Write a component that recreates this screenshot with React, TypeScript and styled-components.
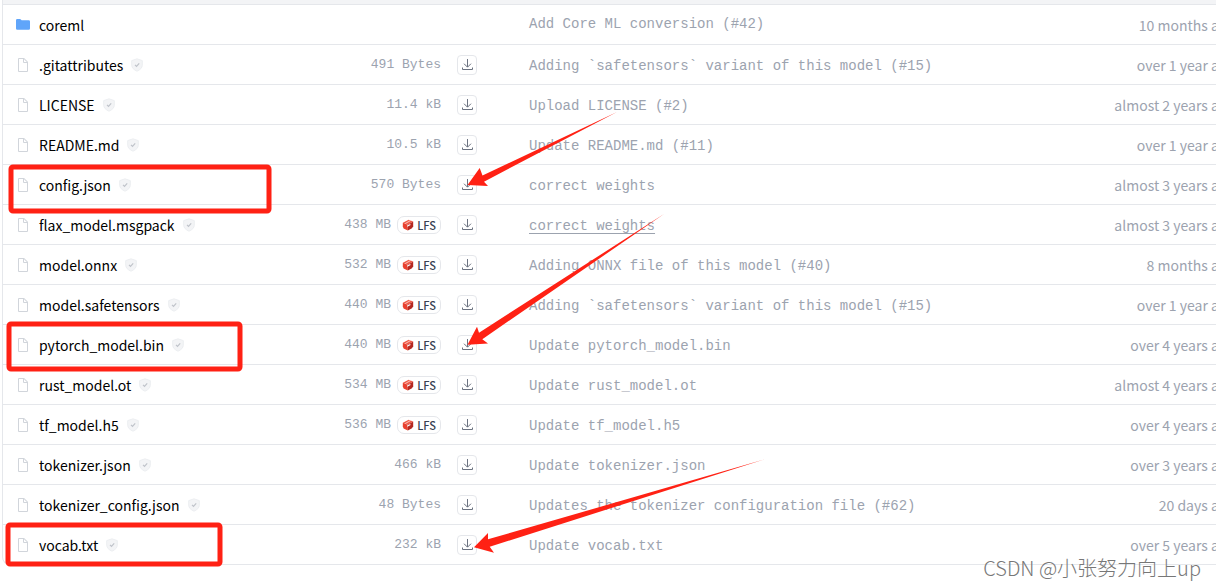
import React from 'react';
import styled, { createGlobalStyle } from 'styled-components';

const GlobalStyle = createGlobalStyle`
  *, *::before, *::after { box-sizing: border-box; }
  body {
    margin: 0;
    background: #fff;
    color: #000;
    font-family: 'Noto Sans CJK SC', 'Noto Sans', sans-serif;
    font-size: 14px;
    line-height: 20px;
  }
`;

const Page = styled.main`
  position: relative;
  overflow: hidden;
  padding: 0 0 23px 2px;
`;

const Card = styled.section`
  width: calc(100% + 32px);
  border: 1px solid #e5e7eb;
  border-top: 0;
  border-radius: 0 0 8px 8px;
  overflow: hidden;
`;

const CommitBar = styled.div`
  height: 4px;
  background: #f3f4f6;
`;

const FileTable = styled.table`
  width: 100%;
  table-layout: fixed;
  border-collapse: separate;
  border-spacing: 0;
`;

const Row = styled.tr`
  height: 40px;
`;

const Cell = styled.td`
  padding: 0;
  border-top: 1px solid #e5e7eb;
  white-space: nowrap;
  vertical-align: middle;
`;

const NameCell = styled(Cell)`
  padding-left: 12px;
`;

const SizeCell = styled(Cell)`
  text-align: right;
`;

const ActionCell = styled(Cell)`
  padding-left: 16px;
`;

const MessageCell = styled(Cell)<{ $raised?: boolean }>`
  padding-bottom: ${(p) => (p.$raised ? '4px' : '0')};
`;

const TimeCell = styled(Cell)`
  padding-right: 12px;
  text-align: right;
  color: #9ca3af;
`;

const NameGroup = styled.div`
  display: flex;
  align-items: center;
  svg { flex: none; }
`;

const FileLink = styled.a`
  margin: 0 8px;
  color: #000;
  font-size: 14px;
  text-decoration: none;
`;

const SizeGroup = styled.div`
  display: flex;
  align-items: center;
  justify-content: flex-end;
  gap: 6px;
  color: #9ca3af;
  font-family: 'Liberation Mono', monospace;
  font-size: 13px;
  line-height: 22px;
`;

const LfsBadge = styled.span`
  display: flex;
  align-items: center;
  justify-content: space-between;
  width: 44px;
  height: 18px;
  padding: 0 4px;
  border: 1px solid #e5e7eb;
  border-radius: 7px;
  color: #374151;
  font-family: 'Noto Sans CJK SC', 'Noto Sans', sans-serif;
  font-size: 11px;
  font-weight: 500;
  line-height: 16px;
`;

const DownloadButton = styled.button`
  display: flex;
  align-items: center;
  justify-content: center;
  width: 20px;
  height: 20px;
  padding: 0;
  border: 1px solid #e5e7eb;
  border-radius: 4px;
  background: #fff;
  color: #6b7280;
  cursor: pointer;
`;

const MessageLink = styled.a<{ $hovered?: boolean }>`
  color: #9ca3af;
  font-family: 'Liberation Mono', monospace;
  font-size: 14px;
  text-decoration: ${(p) => (p.$hovered ? 'underline' : 'none')};
  text-underline-offset: 3px;
`;

const Markup = styled.svg`
  position: absolute;
  top: 0;
  left: 0;
  width: 800px;
  height: 588px;
  pointer-events: none;
`;

const Watermark = styled.span`
  position: absolute;
  right: 15px;
  bottom: 8px;
  color: #777;
  font-size: 20px;
  font-weight: 300;
  line-height: 24px;
  white-space: nowrap;
`;

const FolderIcon = () => (
  <svg width="16" height="16" viewBox="0 0 16 16" fill="#60a5fa" aria-hidden="true">
    <path d="M1 3.300Q1 2 2.300 2h2.600q.6 0 1 .5L6.600 3.200h7.100q1.300 0 1.300 1.200v7.100q0 1.200-1.300 1.200H2.300Q1 12.700 1 11.500z" />
  </svg>
);

const FileIcon = () => (
  <svg width="16" height="16" viewBox="0 0 32 32" fill="#d1d5db" aria-hidden="true">
    <path d="M25.7 9.3l-7-7A.908.908 0 0 0 18 2H8a2.006 2.006 0 0 0-2 2v24a2.006 2.006 0 0 0 2 2h16a2.006 2.006 0 0 0 2-2V10a.908.908 0 0 0-.3-.7zM18 4.400l5.600 5.600H18zM24 28H8V4h8v6a2.006 2.006 0 0 0 2 2h6z" />
  </svg>
);

const ShieldIcon = () => (
  <svg width="12" height="14" viewBox="0 0 12 14" fill="none" aria-hidden="true">
    <path d="M6 .8 11.300 2.600V7c0 2.800-2.200 4.900-5.300 6.200C2.900 11.900.7 9.800.7 7V2.600z" fill="#f3f4f6" stroke="#eceef1" />
    <path d="m4 6.800 1.500 1.500L8.200 5.400" stroke="#bfc3ca" strokeWidth="1.2" />
  </svg>
);

const CubeIcon = () => (
  <svg width="12" height="12" viewBox="0 0 12 12" aria-hidden="true">
    <path d="M.8 3.800 6.600.7l4.600 1.800L5.800 5.800z" fill="#ef5a48" />
    <path d="M.8 3.800 5.800 5.800V11.400L1.600 9.400.8 7.600z" fill="#e8402e" />
    <path d="M5.800 5.800 11.200 2.500V7.300L10 9.200 5.800 11.400z" fill="#b5281f" />
    <path d="M3.200 4.600 8.600 1.500" stroke="#ffd9d3" strokeWidth=".8" />
    <path d="M5.200 7.200 8.400 5.600" stroke="#fff" strokeWidth="1.100" />
  </svg>
);

const DownloadIcon = () => (
  <svg width="12" height="12" viewBox="0 0 12 12" fill="none" stroke="currentColor" aria-hidden="true">
    <path d="M6.500 0v8M3 4.700l3.500 3.500L10 4.700M1.500 8.500v2h10v-2" />
  </svg>
);

interface Entry {
  name: string;
  size?: string;
  lfs?: boolean;
  message: string;
  time: string;
  hovered?: boolean;
}

const entries: Entry[] = [
  { name: 'coreml', message: 'Add Core ML conversion (#42)', time: '10 months ago' },
  { name: '.gitattributes', size: '491 Bytes', message: 'Adding `safetensors` variant of this model (#15)', time: 'over 1 year ago' },
  { name: 'LICENSE', size: '11.4 kB', message: 'Upload LICENSE (#2)', time: 'almost 2 years ago' },
  { name: 'README.md', size: '10.5 kB', message: 'Update README.md (#11)', time: 'over 1 year ago' },
  { name: 'config.json', size: '570 Bytes', message: 'correct weights', time: 'almost 3 years ago' },
  { name: 'flax_model.msgpack', size: '438 MB', lfs: true, message: 'correct weights', time: 'almost 3 years ago', hovered: true },
  { name: 'model.onnx', size: '532 MB', lfs: true, message: 'Adding ONNX file of this model (#40)', time: '8 months ago' },
  { name: 'model.safetensors', size: '440 MB', lfs: true, message: 'Adding `safetensors` variant of this model (#15)', time: 'over 1 year ago' },
  { name: 'pytorch_model.bin', size: '440 MB', lfs: true, message: 'Update pytorch_model.bin', time: 'over 4 years ago' },
  { name: 'rust_model.ot', size: '534 MB', lfs: true, message: 'Update rust_model.ot', time: 'almost 4 years ago' },
  { name: 'tf_model.h5', size: '536 MB', lfs: true, message: 'Update tf_model.h5', time: 'over 4 years ago' },
  { name: 'tokenizer.json', size: '466 kB', message: 'Update tokenizer.json', time: 'over 3 years ago' },
  { name: 'tokenizer_config.json', size: '48 Bytes', message: 'Updates the tokenizer configuration file (#62)', time: '20 days ago' },
  { name: 'vocab.txt', size: '232 kB', message: 'Update vocab.txt', time: 'over 5 years ago' },
];

export default function App() {
  return (
    <Page>
      <GlobalStyle />
      <Card>
        <CommitBar />
        <FileTable aria-label="Model files">
          <colgroup>
            <col width="300" />
            <col width="138" />
            <col width="88" />
            <col />
            <col width="160" />
          </colgroup>
          <tbody>
            {entries.map((e) => (
              <Row key={e.name}>
                <NameCell>
                  <NameGroup>
                    {e.size ? <FileIcon /> : <FolderIcon />}
                    <FileLink href="#">{e.name}</FileLink>
                    {e.size && <ShieldIcon />}
                  </NameGroup>
                </NameCell>
                <SizeCell>
                  {e.size && (
                    <SizeGroup>
                      {e.size}
                      {e.lfs && (
                        <LfsBadge>
                          <CubeIcon />
                          LFS
                        </LfsBadge>
                      )}
                    </SizeGroup>
                  )}
                </SizeCell>
                <ActionCell>
                  {e.size && (
                    <DownloadButton type="button" aria-label={`Download ${e.name}`}>
                      <DownloadIcon />
                    </DownloadButton>
                  )}
                </ActionCell>
                <MessageCell $raised={!e.size}>
                  <MessageLink href="#" $hovered={e.hovered}>{e.message}</MessageLink>
                </MessageCell>
                <TimeCell>{e.time}</TimeCell>
              </Row>
            ))}
          </tbody>
        </FileTable>
      </Card>
      <Markup viewBox="0 0 800 588" aria-hidden="true">
        <g fill="none" stroke="#ff2114" strokeWidth="5">
          <rect x="11" y="167" width="258" height="44" rx="2" />
          <rect x="9" y="324" width="231" height="45" rx="2" />
          <rect x="8" y="525" width="212" height="39" rx="2" />
        </g>
        <g fill="#ff2114">
          <path d="M467.500 185 479.700 168 482.500 175.500 617 112 484 181.700 488 186z" />
          <path d="M467.500 344.800 477 326.700 479 332.700 664 214 482.300 339.200 488 343.500z" />
          <path d="M474 547.300 488 533 488 539.300 764 459.500 489.700 546.700 494 552.700z" />
        </g>
      </Markup>
      <Watermark>CSDN @小张努力向上up</Watermark>
    </Page>
  );
}
